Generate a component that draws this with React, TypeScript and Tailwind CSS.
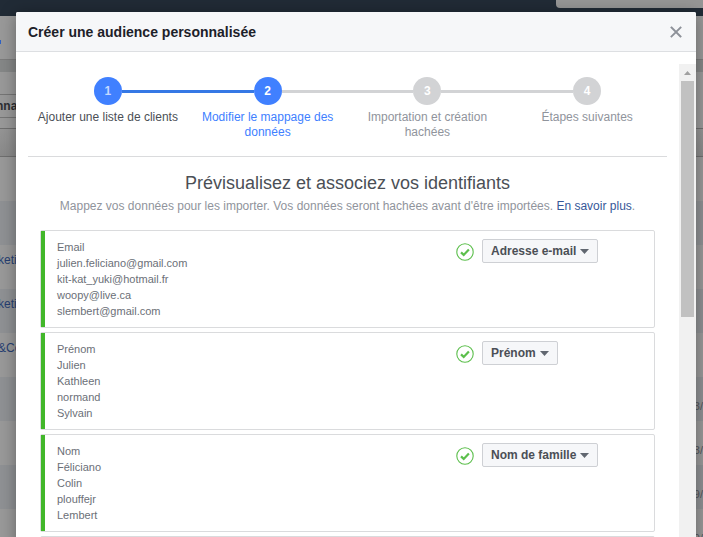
import React, { useState } from 'react';

interface Step {
    label: string;
    state: 'done' | 'current' | 'todo';
}

const STEPS: Step[] = [
    { label: 'Ajouter une liste de clients', state: 'done' },
    { label: 'Modifier le mappage des données', state: 'current' },
    { label: 'Importation et création hachées', state: 'todo' },
    { label: 'Étapes suivantes', state: 'todo' },
];

const STEP_STYLES = {
    done: { circle: 'bg-[#4080ff] text-[#c4d8ff]', label: 'text-[#4b4f56]' },
    current: { circle: 'bg-[#4080ff] text-white', label: 'text-[#4080ff]' },
    todo: { circle: 'bg-[#d2d3d5] text-white', label: 'text-[#90949c]' },
};

interface Mapping {
    type: string;
    samples: string[];
}

const MAPPINGS: Mapping[] = [
    { type: 'Adresse e-mail', samples: ['Email', 'julien.feliciano@gmail.com', 'kit-kat_yuki@hotmail.fr', 'woopy@live.ca', 'slembert@gmail.com'] },
    { type: 'Prénom', samples: ['Prénom', 'Julien', 'Kathleen', 'normand', 'Sylvain'] },
    { type: 'Nom de famille', samples: ['Nom', 'Féliciano', 'Colin', 'plouffejr', 'Lembert'] },
];

const TABLE_ROWS = [
    { name: '', date: '' },
    { name: '', date: '' },
    { name: 'keti', date: '' },
    { name: 'keti', date: '' },
    { name: '&Co', date: '' },
    { name: '', date: '3/' },
    { name: '', date: '3/' },
    { name: '', date: '9/' },
    { name: '', date: '9/' },
];

// Dimmed page behind the dialog
const Backdrop = () => (
    <div aria-hidden="true" className="absolute inset-0 flex flex-col overflow-hidden bg-[#999999] text-xs">
        <div className="flex h-4 shrink-0 justify-end bg-[#212b36]">
            <div className="h-2 w-[147px] rounded-bl-sm bg-[#969696]" />
        </div>
        <div className="flex h-11 shrink-0 items-center border-b border-[#7c7c7c]">
            <div className="mt-2 h-1 w-px bg-[#2f62c4]" />
        </div>
        <div className="h-3 shrink-0 bg-[#858787]" />
        <div className="h-[22px] shrink-0" />
        <div className="flex h-6 w-1/2 shrink-0 items-center border-y border-[#757575]">
            <span className="-ml-1 font-bold text-[#2c2e32]">nna</span>
        </div>
        <div className="h-[10px] shrink-0" />
        <div className="h-[29px] shrink-0 border-y border-[#6f6f6f] bg-linear-to-b from-[#959595] to-[#8a8a8a]" />
        <div>
            {TABLE_ROWS.map((row, i) => (
                <div key={i} className="flex h-11 justify-between odd:bg-[#999999] even:bg-[#8f9194]">
                    <span className="-ml-0.5 pt-[7px] text-[#263f72]">{row.name}</span>
                    <span className="pt-[22px] text-[11px] text-[#53565b]">{row.date}</span>
                </div>
            ))}
        </div>
    </div>
);

const CheckIcon = () => (
    <svg width="18" height="18" viewBox="0 0 18 18" fill="none" className="shrink-0">
        <circle cx="9" cy="9" r="8.2" stroke="#5cbf4c" strokeWidth="1.1" />
        <path d="M5 9.4l2.7 2.5 5.2-5.4" stroke="#5cbf4c" strokeWidth="2.2" />
    </svg>
);

const Stepper = () => (
    <ol className="grid grid-cols-4">
        {STEPS.map((step, i) => {
            const styles = STEP_STYLES[step.state];
            const left = i === 0 ? 'bg-transparent' : i === 1 ? 'bg-[#3578e5]' : 'bg-[#d2d3d5]';
            const right = i === 3 ? 'bg-transparent' : i === 0 ? 'bg-[#3578e5]' : 'bg-[#d2d3d5]';
            return (
                <li key={step.label} className="flex flex-col items-center">
                    <div className="flex w-full items-center">
                        <div className={`h-[3px] flex-1 ${left}`} />
                        <div className={`flex size-7 items-center justify-center rounded-full text-xs font-bold ${styles.circle}`}>
                            {i + 1}
                        </div>
                        <div className={`h-[3px] flex-1 ${right}`} />
                    </div>
                    <p className={`mt-[5px] px-2 text-center text-xs leading-[15px] ${styles.label}`}>{step.label}</p>
                </li>
            );
        })}
    </ol>
);

const MappingCard: React.FC<{ mapping: Mapping }> = ({ mapping }) => (
    <li className="flex min-h-[98px] rounded-xs border border-[#dadbdd]">
        <div className="w-1 shrink-0 bg-[#42b72a]" />
        <div className="flex-1 py-2 pl-3 text-[11px] leading-4 text-[#6b6f77]">
            {mapping.samples.map((sample) => (
                <p key={sample}>{sample}</p>
            ))}
        </div>
        <div className="flex w-[198px] items-start gap-2 pt-2">
            <span className="pt-1">
                <CheckIcon />
            </span>
            <button
                type="button"
                className="flex h-6 items-center gap-1 rounded-xs border border-[#ced0d4] bg-[#f6f7f9] px-2 text-xs font-bold text-[#4b4f56]"
            >
                {mapping.type}
                <svg width="9" height="5" viewBox="0 0 9 5" fill="#616770">
                    <path d="M0 0h9L4.5 5z" />
                </svg>
            </button>
        </div>
    </li>
);

const Scrollbar = () => (
    <div aria-hidden="true" className="mt-3 flex w-[17px] shrink-0 flex-col items-center bg-[#f1f1f1]">
        <div className="flex h-[17px] shrink-0 items-center">
            <svg width="7" height="4" viewBox="0 0 7 4" fill="#a0a0a0">
                <path d="M0 4h7L3.5 0z" />
            </svg>
        </div>
        <div className="h-[236px] w-[13px] bg-[#c1c1c1]" />
    </div>
);

export default function App() {
    const [open, setOpen] = useState(true);

    return (
        <div className="relative h-screen overflow-hidden font-['Liberation_Sans',Arial,sans-serif]">
            <Backdrop />
            {open && (
                <div
                    role="dialog"
                    aria-labelledby="dialog-title"
                    className="relative mt-3 mr-[7px] ml-4 flex h-full flex-col overflow-hidden rounded-t-xs bg-white shadow-[0_2px_16px_rgba(0,0,0,0.35)]"
                >
                    <header className="flex h-10 shrink-0 items-center justify-between border-b border-[#dddfe2] bg-[#f6f7f9] pr-[14px] pl-3">
                        <h1 id="dialog-title" className="text-sm font-bold text-[#1d2129]">
                            Créer une audience personnalisée
                        </h1>
                        <button type="button" aria-label="Fermer" onClick={() => setOpen(false)}>
                            <svg width="12" height="12" viewBox="0 0 12 12" stroke="#8d9199" strokeWidth="1.9">
                                <path d="M1.5 1.5l9 9M10.5 1.5l-9 9" strokeLinecap="square" />
                            </svg>
                        </button>
                    </header>
                    <div className="flex min-h-0 flex-1">
                        <main className="flex-1 overflow-hidden px-3 pt-[25px]">
                            <div className="h-20 border-b border-[#dadbdd]">
                                <Stepper />
                            </div>
                            <h2 className="mt-[15px] text-center text-lg leading-[22px] text-[#4b4f56]">
                                Prévisualisez et associez vos identifiants
                            </h2>
                            <p className="mt-1 text-center text-xs leading-4 text-[#90949c]">
                                Mappez vos données pour les importer. Vos données seront hachées avant d'être importées.{' '}
                                <a href="#" className="text-[#365899]">En savoir plus</a>.
                            </p>
                            <ul className="mt-4 flex flex-col gap-1 px-3">
                                {MAPPINGS.map((mapping) => (
                                    <MappingCard key={mapping.type} mapping={mapping} />
                                ))}
                                <li className="h-[98px] rounded-xs border border-[#dadbdd]" />
                            </ul>
                        </main>
                        <Scrollbar />
                    </div>
                </div>
            )}
        </div>
    );
}
